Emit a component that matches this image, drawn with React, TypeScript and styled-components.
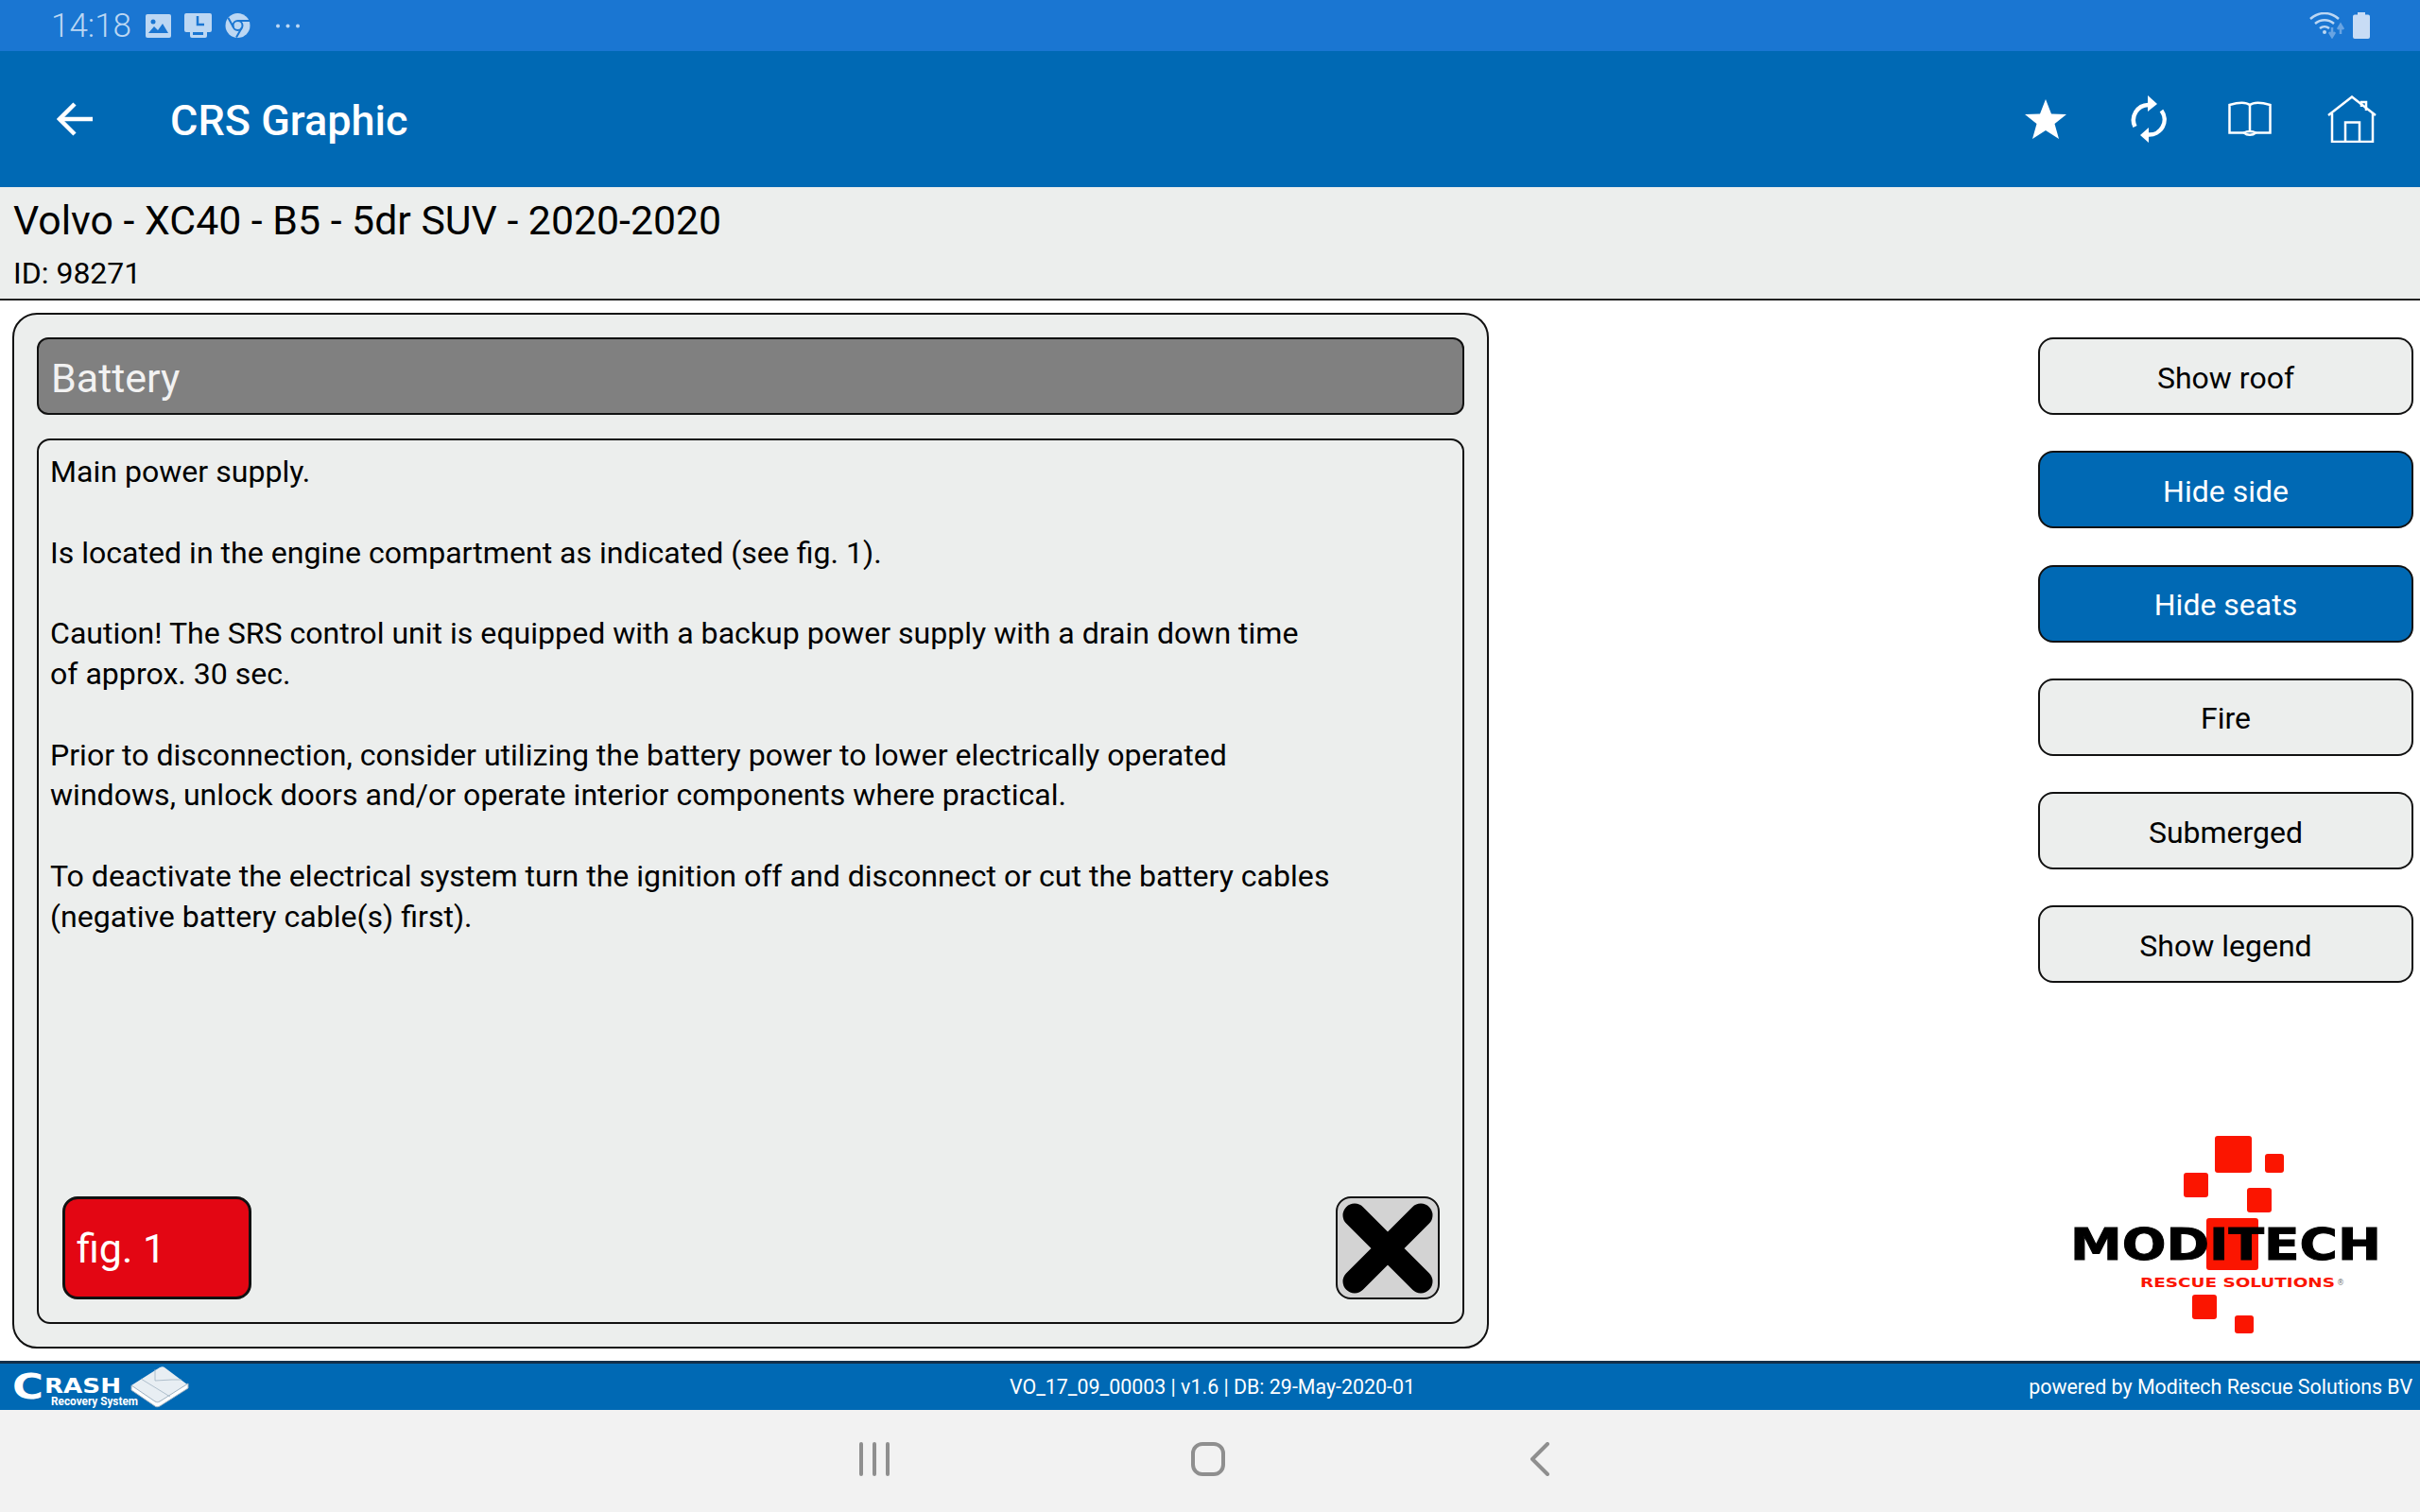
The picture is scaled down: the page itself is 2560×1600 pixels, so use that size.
import React from "react";
import styled, { createGlobalStyle } from "styled-components";

const Global = createGlobalStyle`
  html, body { margin: 0; padding: 0; background: #fff; }
  body { font-family: Roboto, "Liberation Sans", sans-serif; }
  * { box-sizing: border-box; }
`;

const Screen = styled.div`
  width: 2560px;
  height: 1600px;
  display: flex;
  flex-direction: column;
  overflow: hidden;
  background: #fff;
`;

const StatusBar = styled.div`
  height: 54px;
  flex: none;
  background: #1a76d2;
  color: #bcd7f3;
  display: flex;
  align-items: center;
  padding: 0 53px 0 54px;
`;

const Clock = styled.span`
  font-size: 35px;
  font-weight: 300;
  width: 100px;
`;

const StatusIcons = styled.div`
  display: flex;
  align-items: center;
  gap: 14px;
`;

const MoreSlot = styled.div`
  display: flex;
  margin-left: 12px;
`;

const StatusRight = styled.div`
  margin-left: auto;
  display: flex;
  align-items: center;
  gap: 9px;
`;

const AppBar = styled.header`
  height: 144px;
  flex: none;
  background: #0069b4;
  color: #fff;
  display: flex;
  align-items: center;
  padding: 0 46px 0 60px;
`;

const Title = styled.h1`
  margin: 2px 0 0 82px;
  font-size: 45px;
  font-weight: 500;
  line-height: 1;
`;

const Actions = styled.div`
  margin-left: auto;
  display: flex;
  align-items: center;
`;

const ActionSlot = styled.div<{ $w: number }>`
  width: ${(p) => p.$w}px;
  display: flex;
`;

const VehicleBar = styled.div`
  height: 120px;
  flex: none;
  background: #eceeed;
  border-bottom: 2px solid #222;
  padding: 10px 14px 0;
`;

const VehicleName = styled.div`
  font-size: 42.8px;
  line-height: 50px;
  color: #000;
`;

const VehicleId = styled.div`
  font-size: 32px;
  line-height: 36px;
  margin-top: 13px;
  color: #000;
`;

const Main = styled.main`
  flex: 1;
  min-height: 0;
  display: flex;
  justify-content: space-between;
  padding: 13px 7px 13px 13px;
`;

const Panel = styled.section`
  width: 1562px;
  display: flex;
  flex-direction: column;
  gap: 25px;
  padding: 24px;
  background: #eceeed;
  border: 2px solid #111;
  border-radius: 26px;
`;

const PanelHeader = styled.div`
  height: 82px;
  flex: none;
  display: flex;
  align-items: center;
  padding: 3px 13px 0;
  background: #808080;
  color: #f2f2f2;
  font-size: 43px;
  border: 2px solid #111;
  border-radius: 12px;
`;

const PanelBody = styled.div`
  flex: 1;
  min-height: 0;
  display: flex;
  flex-direction: column;
  border: 2px solid #111;
  border-radius: 14px;
`;

const Copy = styled.div`
  padding: 12px 12px 0;
  font-size: 32.1px;
  line-height: 42.8px;
  color: #000;
`;

const CopyBlock = styled.p`
  margin: 0 0 42.8px;
  white-space: nowrap;
`;

const BodyActions = styled.div`
  margin-top: auto;
  display: flex;
  justify-content: space-between;
  padding: 0 24px 24px 25px;
`;

const FigButton = styled.button`
  width: 200px;
  height: 109px;
  padding: 0 0 0 12px;
  text-align: left;
  background: #e30613;
  color: #fff;
  font: 400 43px Roboto, sans-serif;
  border: 3px solid #111;
  border-radius: 16px;
`;

const CloseButton = styled.button`
  width: 110px;
  height: 109px;
  padding: 0;
  display: flex;
  align-items: center;
  justify-content: center;
  background: #d3d3d3;
  border: 2px solid #111;
  border-radius: 16px;
`;

const Side = styled.aside`
  width: 397px;
  margin-top: 26px;
  display: flex;
  flex-direction: column;
  align-items: center;
  gap: 38.3px;
`;

const SideButton = styled.button<{ $active?: boolean }>`
  width: 100%;
  height: 82px;
  flex: none;
  padding: 3px 0 0;
  background: ${(p) => (p.$active ? "#0069b4" : "#eceeed")};
  color: ${(p) => (p.$active ? "#fff" : "#000")};
  font: 400 32px Roboto, sans-serif;
  border: 2px solid #111;
  border-radius: 16px;
`;

const LogoWrap = styled.div`
  margin-top: auto;
  margin-bottom: 16px;
  display: flex;
`;

const Footer = styled.footer`
  height: 52px;
  flex: none;
  background: #0069b4;
  border-top: 3px solid #14304a;
  color: #fff;
  font-size: 21.4px;
  display: grid;
  grid-template-columns: 1fr auto 1fr;
  align-items: center;
  padding: 0 8px 0 13px;
`;

const FooterBrand = styled.div`
  display: flex;
  align-items: center;
`;

const FooterRight = styled.div`
  justify-self: end;
`;

const NavBar = styled.nav`
  height: 108px;
  flex: none;
  background: #f2f2f2;
  display: flex;
  align-items: flex-start;
  padding: 34px 0 0 908px;
`;

const NavSlot = styled.div<{ $w: number }>`
  width: ${(p) => p.$w}px;
  display: flex;
`;

const BackIcon = () => (
  <svg width="38" height="36" viewBox="0 0 38 36" fill="none" stroke="#fff" strokeWidth="4.5">
    <path d="M38 18H4" />
    <path d="M19 2 3 18l16 16" />
  </svg>
);

const StarIcon = () => (
  <svg width="44" height="42" viewBox="0 0 44 42" fill="#fff">
    <polygon points="22,0 28,15.5 44,16 31.5,26 36,42 22,33 8,42 12.5,26 0,16 16,15.5" />
  </svg>
);

const SyncIcon = () => (
  <svg width="38" height="50" viewBox="0 0 38 50" fill="none">
    <path d="M18.500 10A16 16 0 0 0 4.500 33" stroke="#fff" strokeWidth="4.500" />
    <path d="M32.500 16A16 16 0 0 1 18.500 41.500" stroke="#fff" strokeWidth="4.500" />
    <path d="M18 0l10 9-10 8z" fill="#fff" />
    <path d="M19 34l-9 8 9 8z" fill="#fff" />
  </svg>
);

const BookIcon = () => (
  <svg width="46" height="38" viewBox="0 0 46 38" fill="none" stroke="#fff" strokeWidth="2.500">
    <path d="M23 4C19 1 10 1.500 1.500 4v29.500H18" />
    <path d="M23 4c4-3 13-2.500 21.500 0v29.500H28" />
    <path d="M23 4v28" />
    <path d="M17 33.500c3-2 9-2 12 0-3 3-9 3-12 0z" />
  </svg>
);

const HomeIcon = () => (
  <svg width="52" height="50" viewBox="0 0 52 50" fill="none" stroke="#fff" strokeWidth="2.500">
    <path d="M1 21 26 1.500 51 21" />
    <path d="M5 19v30h43V19" />
    <path d="M19 49V28.500h15V49" />
    <path d="M36 12V7h5v9" />
  </svg>
);

const ImageGlyph = () => (
  <svg width="27" height="25" viewBox="0 0 27 25">
    <rect width="27" height="25" rx="2" fill="#bcd7f3" />
    <circle cx="8" cy="8" r="2.500" fill="#1a76d2" />
    <path d="M3 20l6-7 4 4 5-7 6 10z" fill="#1a76d2" />
  </svg>
);

const SaveGlyph = () => (
  <svg width="29" height="26" viewBox="0 0 29 26">
    <path d="M2 0h25a2 2 0 0 1 2 2v16a2 2 0 0 1-2 2h-3v4a2 2 0 0 1-2 2H8a2 2 0 0 1-2-2v-4H2a2 2 0 0 1-2-2V2a2 2 0 0 1 2-2z" fill="#bcd7f3" />
    <path d="M14 3v9h7" fill="none" stroke="#1a76d2" strokeWidth="2.500" />
    <rect x="9" y="20" width="11" height="3" fill="#1a76d2" />
  </svg>
);

const ChromeGlyph = () => (
  <svg width="27" height="26" viewBox="0 0 27 26">
    <circle cx="13.500" cy="13" r="13" fill="#bcd7f3" />
    <circle cx="13.500" cy="13" r="5" fill="none" stroke="#1a76d2" strokeWidth="2" />
    <path d="M14 8h12M9 15 3.500 5M18 15l-6 10.500" stroke="#1a76d2" strokeWidth="2" />
  </svg>
);

const MoreGlyph = () => (
  <svg width="27" height="5" viewBox="0 0 27 5" fill="#bcd7f3">
    <circle cx="3" cy="2.500" r="2" />
    <circle cx="13.500" cy="2.500" r="2" />
    <circle cx="24" cy="2.500" r="2" />
  </svg>
);

const WifiGlyph = () => (
  <svg width="37" height="28" viewBox="0 0 37 28" fill="none">
    <path d="M1 7c9-8 21-8 30 0" stroke="#bcd7f3" strokeWidth="2.500" />
    <path d="M6 12c6-5 14-5 20 0" stroke="#bcd7f3" strokeWidth="2.500" />
    <path d="M11 17c3-2.500 7-2.500 10 0" stroke="#bcd7f3" strokeWidth="2.500" />
    <circle cx="16" cy="21" r="2" fill="#bcd7f3" />
    <path d="M24 16v9m-3-4 3 5 3-5" stroke="#69a4e2" strokeWidth="2.500" />
    <path d="M33 23v-9m-3 4 3-5 3 5" stroke="#69a4e2" strokeWidth="2.500" />
  </svg>
);

const BatteryGlyph = () => (
  <svg width="18" height="28" viewBox="0 0 18 28" fill="#c8dcf5">
    <path d="M5 0h8v2.500h3a2 2 0 0 1 2 2V26a2 2 0 0 1-2 2H2a2 2 0 0 1-2-2V4.500a2 2 0 0 1 2-2h3z" />
  </svg>
);

const CrossIcon = () => (
  <svg width="98" height="98" viewBox="0 0 98 98" fill="none" stroke="#000" strokeWidth="25" strokeLinecap="round">
    <path d="M14 14 84 84M84 14 14 84" />
  </svg>
);

const ModitechLogo = () => (
  <svg width="331" height="209" viewBox="-5 0 331 209">
    <g fill="#fb1500">
      <rect x="149" y="0" width="39" height="39" rx="3" />
      <rect x="202" y="19" width="20" height="20" rx="3" />
      <rect x="116" y="39" width="26" height="26" rx="3" />
      <rect x="183" y="55" width="26" height="26" rx="3" />
      <rect x="140" y="87" width="55" height="55" rx="3" />
      <rect x="125" y="168" width="26" height="26" rx="3" />
      <rect x="170" y="190" width="20" height="19" rx="3" />
    </g>
    <text x="-4" y="131" fontFamily="'DejaVu Sans'" fontWeight="700" fontSize="46" textLength="329" lengthAdjust="spacingAndGlyphs" fill="#000" stroke="#000" strokeWidth="1">MODITECH</text>
    <text x="70" y="160" fontFamily="'DejaVu Sans'" fontWeight="700" fontSize="14" textLength="206" lengthAdjust="spacingAndGlyphs" fill="#fb1500">RESCUE SOLUTIONS</text>
    <text x="278" y="158" fontFamily="'DejaVu Sans'" fontSize="8" fill="#777">®</text>
  </svg>
);

const CrashLogo = () => (
  <svg width="187" height="48" viewBox="0 0 187 48">
    <text x="0" y="35.500" fontFamily="'DejaVu Sans'" fontWeight="700" fontSize="37.500" textLength="33" lengthAdjust="spacingAndGlyphs" fill="#fff">C</text>
    <text x="34" y="29.500" fontFamily="'DejaVu Sans'" fontWeight="700" fontSize="20.500" textLength="81" lengthAdjust="spacingAndGlyphs" fill="#fff">RASH</text>
    <text x="41" y="43" fontFamily="Roboto" fontWeight="700" fontSize="12" textLength="92" lengthAdjust="spacingAndGlyphs" fill="#fff">Recovery System</text>
    <g transform="translate(1 2)">
      <path d="M125 20 155 1c2-1 4-1 5 0l24 18c1 1 1 3 0 4l-30 19c-2 1-3 1-4 0l-24-17c-1-2-1-4 0-5z" fill="#e8eef3" />
      <path d="M125 20 150 37c2 1 3 1 5 0l30-19v5l-30 19c-2 1-4 1-5 0l-25-17z" fill="#fff" stroke="#9fb2c2" strokeWidth="1" />
      <path d="M135 13 166 32M150 3v12l18-1M168 14l10 0" fill="none" stroke="#9fb2c2" strokeWidth="0.800" />
    </g>
  </svg>
);

const NavLines = () => (
  <svg width="34" height="36" viewBox="0 0 34 36" stroke="#8f8f8f" strokeWidth="4" strokeLinecap="round">
    <path d="M3 2v32M17 2v32M31 2v32" />
  </svg>
);

const NavHome = () => (
  <svg width="36" height="36" viewBox="0 0 36 36" fill="none" stroke="#8f8f8f" strokeWidth="4">
    <rect x="2" y="2" width="32" height="32" rx="10" />
  </svg>
);

const NavBack = () => (
  <svg width="22" height="36" viewBox="0 0 22 36" fill="none" stroke="#8f8f8f" strokeWidth="4" strokeLinecap="round" strokeLinejoin="round">
    <path d="M19 2 3 18l16 16" />
  </svg>
);

const copy = [
  ["Main power supply."],
  ["Is located in the engine compartment as indicated (see fig. 1)."],
  [
    "Caution! The SRS control unit is equipped with a backup power supply with a drain down time",
    "of approx. 30 sec.",
  ],
  [
    "Prior to disconnection, consider utilizing the battery power to lower electrically operated",
    "windows, unlock doors and/or operate interior components where practical.",
  ],
  [
    "To deactivate the electrical system turn the ignition off and disconnect or cut the battery cables",
    "(negative battery cable(s) first).",
  ],
];

const sideButtons = [
  { label: "Show roof" },
  { label: "Hide side", active: true },
  { label: "Hide seats", active: true },
  { label: "Fire" },
  { label: "Submerged" },
  { label: "Show legend" },
];

export default function App() {
  return (
    <Screen>
      <Global />
      <StatusBar>
        <Clock>14:18</Clock>
        <StatusIcons>
          <ImageGlyph />
          <SaveGlyph />
          <ChromeGlyph />
          <MoreSlot>
            <MoreGlyph />
          </MoreSlot>
        </StatusIcons>
        <StatusRight>
          <WifiGlyph />
          <BatteryGlyph />
        </StatusRight>
      </StatusBar>
      <AppBar>
        <BackIcon />
        <Title>CRS Graphic</Title>
        <Actions>
          <ActionSlot $w={112}>
            <StarIcon />
          </ActionSlot>
          <ActionSlot $w={103}>
            <SyncIcon />
          </ActionSlot>
          <ActionSlot $w={105}>
            <BookIcon />
          </ActionSlot>
          <ActionSlot $w={52}>
            <HomeIcon />
          </ActionSlot>
        </Actions>
      </AppBar>
      <VehicleBar>
        <VehicleName>Volvo - XC40 - B5 - 5dr SUV - 2020-2020</VehicleName>
        <VehicleId>ID: 98271</VehicleId>
      </VehicleBar>
      <Main>
        <Panel>
          <PanelHeader>Battery</PanelHeader>
          <PanelBody>
            <Copy>
              {copy.map((lines) => (
                <CopyBlock key={lines[0]}>
                  {lines.map((line, i) => (
                    <React.Fragment key={line}>
                      {i > 0 && <br />}
                      {line}
                    </React.Fragment>
                  ))}
                </CopyBlock>
              ))}
            </Copy>
            <BodyActions>
              <FigButton>fig. 1</FigButton>
              <CloseButton>
                <CrossIcon />
              </CloseButton>
            </BodyActions>
          </PanelBody>
        </Panel>
        <Side>
          {sideButtons.map((b) => (
            <SideButton key={b.label} $active={b.active}>
              {b.label}
            </SideButton>
          ))}
          <LogoWrap>
            <ModitechLogo />
          </LogoWrap>
        </Side>
      </Main>
      <Footer>
        <FooterBrand>
          <CrashLogo />
        </FooterBrand>
        <div>VO_17_09_00003 | v1.6 | DB: 29-May-2020-01</div>
        <FooterRight>powered by Moditech Rescue Solutions BV</FooterRight>
      </Footer>
      <NavBar>
        <NavSlot $w={352}>
          <NavLines />
        </NavSlot>
        <NavSlot $w={358}>
          <NavHome />
        </NavSlot>
        <NavSlot $w={22}>
          <NavBack />
        </NavSlot>
      </NavBar>
    </Screen>
  );
}
